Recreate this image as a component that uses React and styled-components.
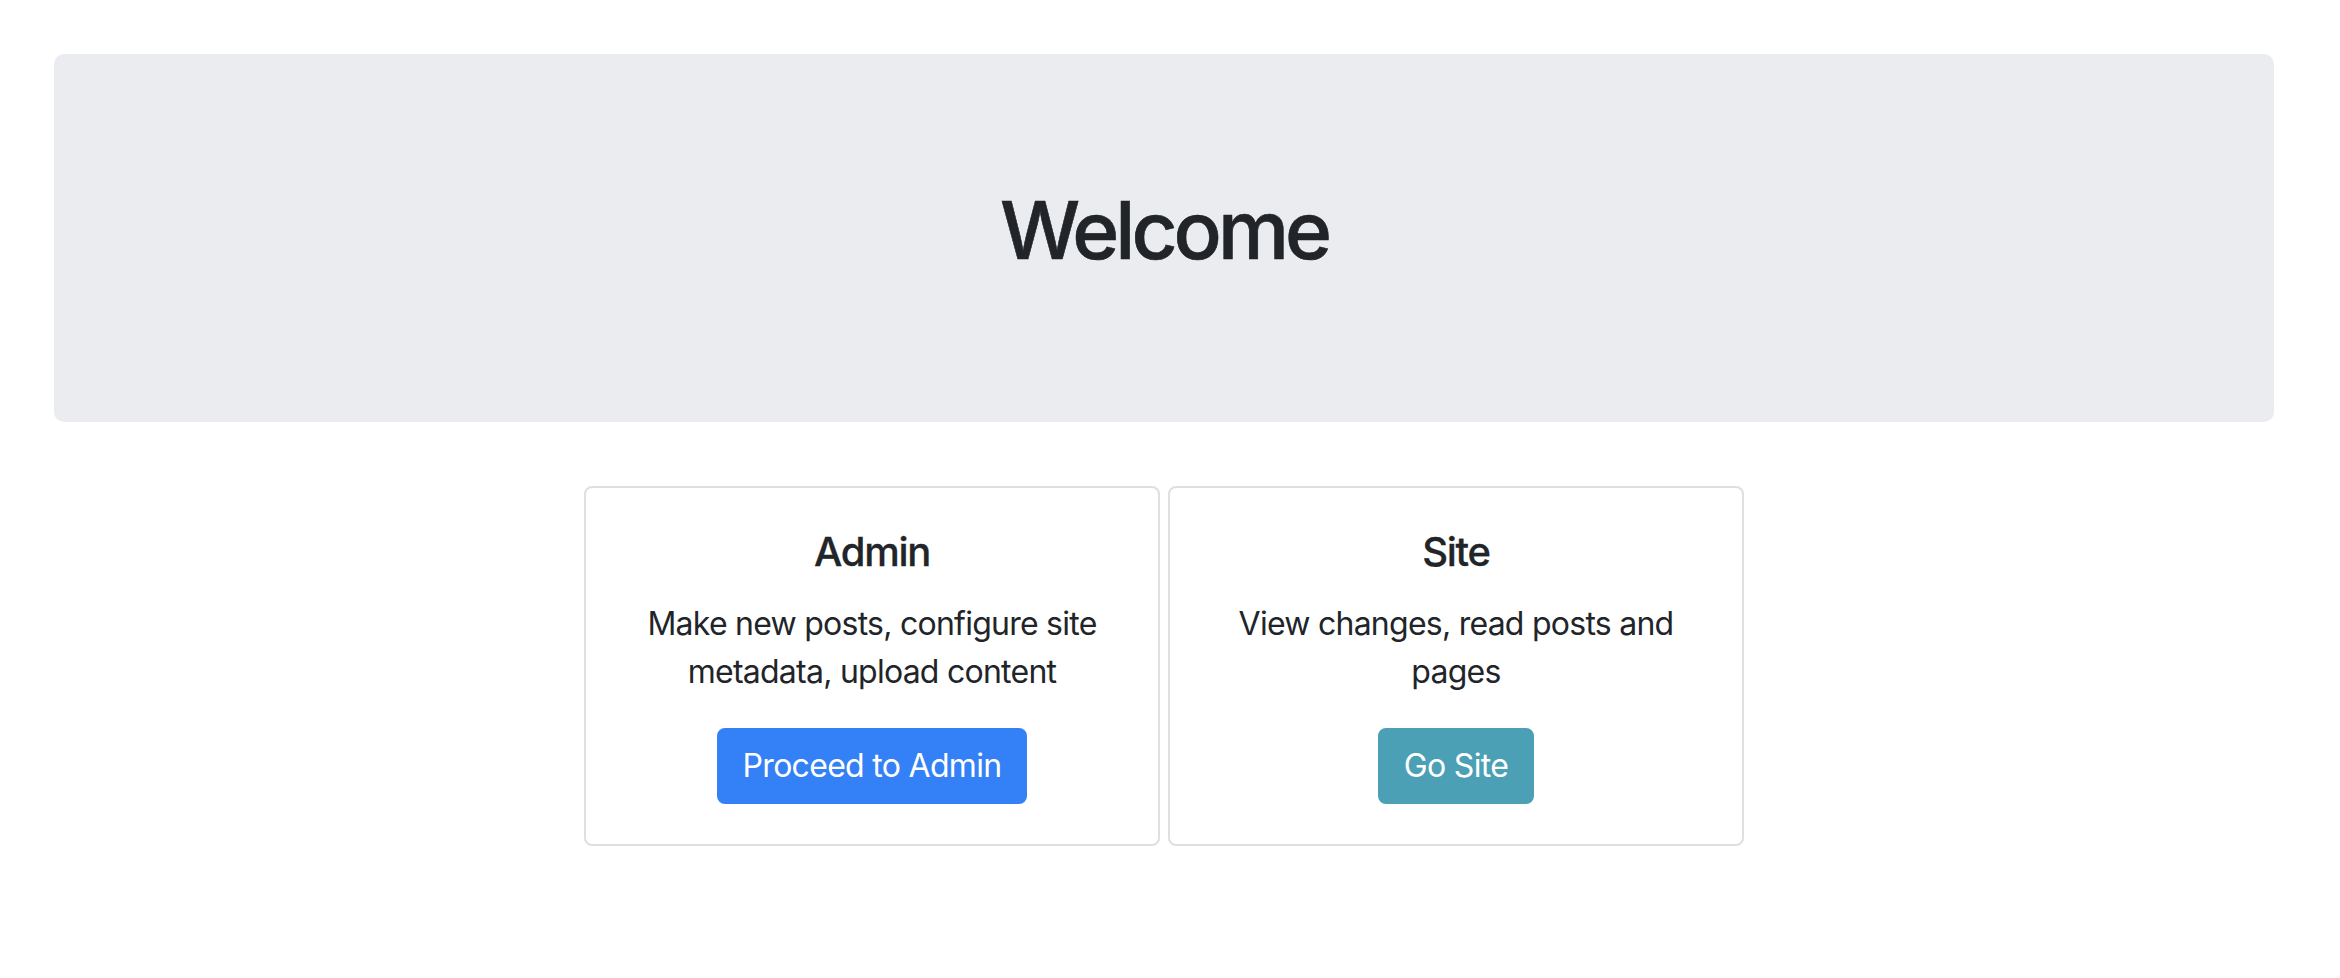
import React from "react";
import styled, { createGlobalStyle } from "styled-components";

const GlobalStyle = createGlobalStyle`
  html, body {
    margin: 0;
    padding: 0;
    background: #ffffff;
  }
  body {
    font-family: Inter, "Noto Sans", "Liberation Sans", sans-serif;
    color: #212529;
    font-size: 32px;
    line-height: 48px;
  }
  * { box-sizing: border-box; }
`;

const Page = styled.div`
  padding: 54px 66px 0 54px;
`;

const Jumbotron = styled.header`
  background: #ebecf0;
  border-radius: 10px;
  padding: 128px 64px;
  margin-bottom: 64px;
  text-align: center;
`;

const Heading = styled.h1`
  margin: 0 0 16px;
  font-size: 80px;
  line-height: 96px;
  font-weight: 500;
  letter-spacing: -4px;
  color: #212529;
  -webkit-text-stroke: 0.6px #212529;
`;

const CardRow = styled.div`
  display: flex;
  justify-content: center;
  gap: 8px;
`;

const Card = styled.section`
  width: 576px;
  border: 2px solid #dfdfdf;
  border-radius: 8px;
  padding: 40px;
  text-align: center;
  display: flex;
  flex-direction: column;
  align-items: center;
`;

const CardTitle = styled.h5`
  margin: 0 0 24px;
  font-size: 40px;
  line-height: 48px;
  font-weight: 500;
  letter-spacing: -1.3px;
  color: #212529;
  -webkit-text-stroke: 0.3px #212529;
`;

const CardText = styled.p`
  margin: 0 0 32px;
  font-size: 32px;
  line-height: 48px;
  letter-spacing: -0.75px;
  color: #212529;
`;

const Button = styled.a`
  display: inline-block;
  padding: 12px 24px;
  border: 2px solid ${(p) => p.$bg};
  border-radius: 8px;
  background: ${(p) => p.$bg};
  color: #ffffff;
  font-size: 32px;
  line-height: 48px;
  letter-spacing: -0.7px;
  text-decoration: none;
  cursor: pointer;
`;

export default function App() {
  return (
    <>
      <GlobalStyle />
      <Page>
        <Jumbotron>
          <Heading>Welcome</Heading>
        </Jumbotron>
        <CardRow>
          <Card>
            <CardTitle>Admin</CardTitle>
            <CardText>
              Make new posts, configure site
              <br />
              metadata, upload content
            </CardText>
            <Button $bg="#3480f6" href="#">Proceed to Admin</Button>
          </Card>
          <Card>
            <CardTitle>Site</CardTitle>
            <CardText>
              View changes, read posts and
              <br />
              pages
            </CardText>
            <Button $bg="#4ba0b5" href="#">Go Site</Button>
          </Card>
        </CardRow>
      </Page>
    </>
  );
}
